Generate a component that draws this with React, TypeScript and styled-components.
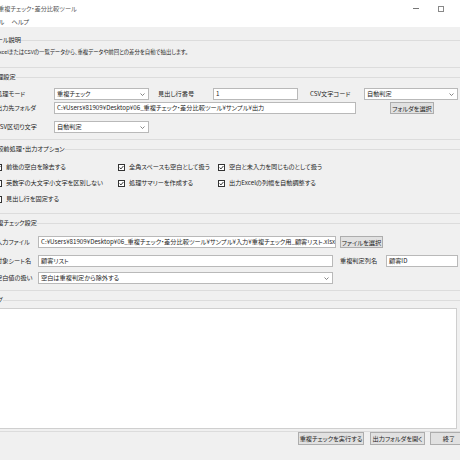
import styled, { createGlobalStyle } from 'styled-components'

const GlobalStyle = createGlobalStyle`
  html, body {
    margin: 0;
    padding: 0;
  }
  body {
    width: 460px;
    height: 460px;
    overflow: hidden;
    background: #f0f0f0;
    font-family: "Noto Sans CJK JP", "Noto Sans", sans-serif;
    font-size: 6.2px;
    font-feature-settings: "palt";
    color: #262626;
  }
`

const Window = styled.div`
  width: 502px;
  height: 460px;
  margin-left: -24px;
  background: #f0f0f0;
  display: flex;
  flex-direction: column;
`

const TitleBar = styled.div`
  height: 17px;
  background: #fff;
  display: flex;
  align-items: center;
  padding-left: 22px;
`

const Title = styled.div`
  flex: 1;
  color: #555;
  line-height: 10px;
`

const CaptionButton = styled.div`
  width: 25px;
  height: 17px;
  display: flex;
  align-items: center;
  justify-content: center;
`

const MinimizeGlyph = styled.span`
  width: 6px;
  height: 1px;
  background: #777;
`

const MaximizeGlyph = styled.span`
  width: 6px;
  height: 6px;
  box-sizing: border-box;
  border: 1px solid #888;
`

const MenuBar = styled.div`
  height: 10px;
  background: #fff;
  display: flex;
  align-items: center;
  padding-left: 7px;
  gap: 7px;
  line-height: 10px;
  color: #444;
`

const Content = styled.div`
  display: flex;
  flex-direction: column;
  gap: 4px;
  padding-top: 8px;
`

const Group = styled.fieldset<{ $pt: number; $pb: number }>`
  margin: 0 6px;
  min-width: 0;
  border: 1px solid #dcdcdc;
  padding: ${p => p.$pt}px 13px ${p => p.$pb}px;
`

const Legend = styled.legend`
  margin-left: -5px;
  padding: 0;
  line-height: 10px;
`

const Description = styled.div`
  font-size: 5.4px;
  line-height: 10px;
  white-space: nowrap;
`

const Row = styled.div<{ $mt?: number }>`
  display: flex;
  align-items: center;
  height: 12px;
  margin-top: ${p => p.$mt ?? 0}px;
`

const FieldLabel = styled.div<{ $w: number; $ml?: number }>`
  width: ${p => p.$w}px;
  margin-left: ${p => p.$ml ?? 0}px;
  flex-shrink: 0;
  line-height: 10px;
  white-space: nowrap;
`

const Entry = styled.div<{ $w: number }>`
  width: ${p => p.$w}px;
  height: 12px;
  box-sizing: border-box;
  flex-shrink: 0;
  background: #fff;
  border: 1px solid #b9b9b9;
  padding: 0 2px;
  line-height: 10px;
  white-space: nowrap;
  overflow: hidden;
`

const Combo = styled(Entry)`
  display: flex;
  align-items: center;
  justify-content: space-between;
  padding-right: 3px;
`

const Button = styled.div<{ $w: number; $ml?: number; $h?: number }>`
  width: ${p => p.$w}px;
  height: ${p => p.$h ?? 12}px;
  margin-left: ${p => p.$ml ?? 0}px;
  box-sizing: border-box;
  flex-shrink: 0;
  background: #e1e1e1;
  border: 1px solid #adadad;
  display: flex;
  align-items: center;
  justify-content: center;
  white-space: nowrap;
`

const OptionGrid = styled.div`
  display: grid;
  grid-template-columns: 123px 100px auto;
  grid-auto-rows: 16px;
  margin-left: -1px;
`

const Option = styled.div`
  display: flex;
  align-items: center;
  gap: 4px;
  line-height: 10px;
  white-space: nowrap;
`

const Box = styled.span`
  width: 7px;
  height: 7px;
  box-sizing: border-box;
  border: 1px solid #333;
  background: #fff;
  display: flex;
  align-items: center;
  justify-content: center;
`

const LogArea = styled.div`
  width: 461px;
  height: 121px;
  box-sizing: border-box;
  background: #fff;
  border: 1px solid #cfcfcf;
`

const Footer = styled.div`
  display: flex;
  justify-content: flex-end;
  gap: 5px;
  padding: 0 10px 0 0;
`

const Chevron = () => (
  <svg width="5" height="3" viewBox="0 0 5 3">
    <path d="M0.5 0.5 L2.5 2.5 L4.5 0.5" fill="none" stroke="#666" strokeWidth="0.8" />
  </svg>
)

const Check = () => (
  <svg width="5" height="5" viewBox="0 0 5 5">
    <path d="M0.6 2.6 L2 3.9 L4.4 1" fill="none" stroke="#222" strokeWidth="0.9" />
  </svg>
)

const CheckOption = ({ label, checked }: { label: string; checked?: boolean }) => (
  <Option>
    <Box>{checked && <Check />}</Box>
    {label}
  </Option>
)

const App = () => {
  return (
    <Window>
      <GlobalStyle />
      <TitleBar>
        <Title>重複チェック・差分比較ツール</Title>
        <CaptionButton>
          <MinimizeGlyph />
        </CaptionButton>
        <CaptionButton>
          <MaximizeGlyph />
        </CaptionButton>
        <CaptionButton>
          <svg width="6" height="6" viewBox="0 0 6 6">
            <path d="M0 0 L6 6 M6 0 L0 6" stroke="#666" strokeWidth="0.8" />
          </svg>
        </CaptionButton>
      </TitleBar>
      <MenuBar>
        <span>ファイル</span>
        <span>ヘルプ</span>
      </MenuBar>

      <Content>
        <Group $pt={2} $pb={10}>
          <Legend>ツール説明</Legend>
          <Description>
            ExcelまたはCSVの一覧データから、重複データや前回との差分を自動で抽出します。
          </Description>
        </Group>

        <Group $pt={6} $pb={6}>
          <Legend>処理設定</Legend>
          <Row>
            <FieldLabel $w={58}>処理モード</FieldLabel>
            <Combo $w={95}>
              重複チェック
              <Chevron />
            </Combo>
            <FieldLabel $w={55} $ml={9}>見出し行番号</FieldLabel>
            <Entry $w={85}>1</Entry>
            <FieldLabel $w={54} $ml={12}>CSV文字コード</FieldLabel>
            <Combo $w={94}>
              自動判定
              <Chevron />
            </Combo>
          </Row>
          <Row $mt={2}>
            <FieldLabel $w={58}>出力先フォルダ</FieldLabel>
            <Entry $w={302}>C:¥Users¥81909¥Desktop¥06_重複チェック・差分比較ツール¥サンプル¥出力</Entry>
            <Button $w={44} $ml={34}>フォルダを選択</Button>
          </Row>
          <Row $mt={7}>
            <FieldLabel $w={58}>CSV区切り文字</FieldLabel>
            <Combo $w={95}>
              自動判定
              <Chevron />
            </Combo>
          </Row>
        </Group>

        <Group $pt={5} $pb={6}>
          <Legend>比較前処理・出力オプション</Legend>
          <OptionGrid>
            <CheckOption label="前後の空白を除去する" checked />
            <CheckOption label="全角スペースも空白として扱う" checked />
            <CheckOption label="空白と未入力を同じものとして扱う" checked />
            <CheckOption label="英数字の大文字小文字を区別しない" />
            <CheckOption label="処理サマリーを作成する" checked />
            <CheckOption label="出力Excelの列幅を自動調整する" checked />
            <CheckOption label="見出し行を固定する" />
          </OptionGrid>
        </Group>

        <Group $pt={8} $pb={6}>
          <Legend>重複チェック設定</Legend>
          <Row>
            <FieldLabel $w={42}>入力ファイル</FieldLabel>
            <Entry $w={298}>
              C:¥Users¥81909¥Desktop¥06_重複チェック・差分比較ツール¥サンプル¥入力¥重複チェック用_顧客リスト.xlsx
            </Entry>
            <Button $w={43} $ml={4}>ファイルを選択</Button>
          </Row>
          <Row $mt={7}>
            <FieldLabel $w={42}>対象シート名</FieldLabel>
            <Entry $w={295}>顧客リスト</Entry>
            <FieldLabel $w={46} $ml={7}>重複判定列名</FieldLabel>
            <Entry $w={72}>顧客ID</Entry>
          </Row>
          <Row $mt={5}>
            <FieldLabel $w={42}>空白値の扱い</FieldLabel>
            <Combo $w={295}>
              空白は重複判定から除外する
              <Chevron />
            </Combo>
          </Row>
        </Group>

        <Group $pt={3} $pb={2}>
          <Legend>ログ</Legend>
          <LogArea />
        </Group>
      </Content>

      <Footer>
        <Button $w={66} $h={13}>重複チェックを実行する</Button>
        <Button $w={55} $h={13} $ml={1}>出力フォルダを開く</Button>
        <Button $w={38} $h={13}>終了</Button>
      </Footer>
    </Window>
  )
}

export default App
